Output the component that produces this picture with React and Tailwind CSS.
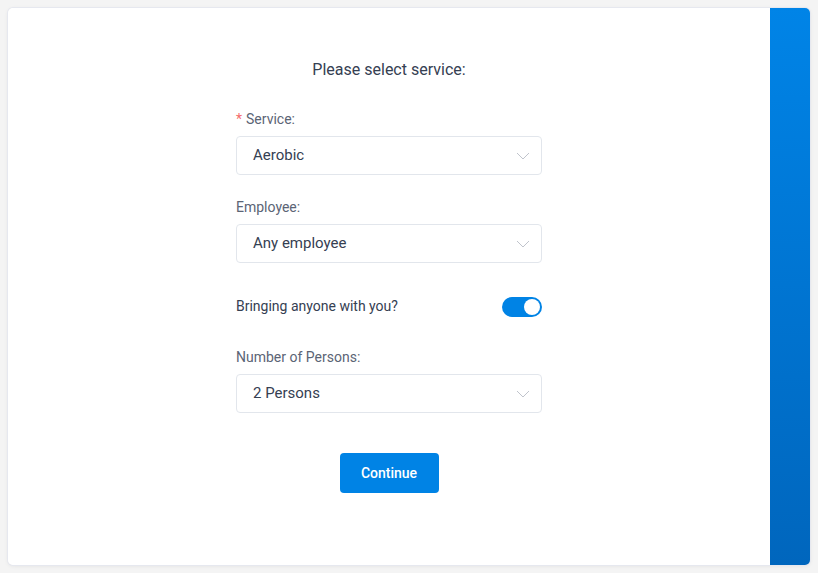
function Select({ value }) {
    return (
        <div className="flex items-center justify-between h-[39px] pl-4 pr-[10px] bg-white border border-[#e2e6ec] rounded-[4px]">
            <span className="text-[15px] text-[#354052]">{value}</span>
            <svg width="14" height="8" viewBox="0 0 14 8" fill="none" className="mr-[1px]">
                <path d="M1 1l6 6 6-6" stroke="#c0c4cc" strokeWidth="1" />
            </svg>
        </div>
    )
}

export default function App() {
    return (
        <div className="w-[818px] h-[573px] bg-[#f4f4f4] p-2 font-['Roboto',sans-serif]">
            <div className="flex h-[557px] w-[802px] rounded-[5px] overflow-hidden shadow-[0_0_0_1px_#e6e8ef,0_1px_4px_rgba(0,0,0,0.08)]">
                <div className="flex-1 bg-white flex flex-col items-center pt-[51px]">
                    <h1 className="text-[16px] text-[#354052] leading-[22px]">Please select service:</h1>
                    <div className="w-[306px] mt-[28px] flex flex-col">
                        <label className="text-[14px] text-[#5b6475] leading-[20px] mb-[7px]">
                            <span className="text-[#f56c6c] mr-1">*</span>Service:
                        </label>
                        <Select value="Aerobic" />
                        <label className="text-[14px] text-[#5b6475] leading-[20px] mt-[22px] mb-[7px]">Employee:</label>
                        <Select value="Any employee" />
                        <div className="flex items-center justify-between mt-[33px]">
                            <span className="text-[14px] text-[#354052]">Bringing anyone with you?</span>
                            <div className="w-[40px] h-[20px] rounded-full bg-[#0083e5] flex items-center justify-end pr-[2px]">
                                <div className="w-[16px] h-[16px] rounded-full bg-white" />
                            </div>
                        </div>
                        <label className="text-[14px] text-[#5b6475] leading-[20px] mt-[30px] mb-[7px]">Number of Persons:</label>
                        <Select value="2 Persons" />
                    </div>
                    <button className="mt-[40px] w-[99px] h-[40px] rounded-[4px] bg-[#0083e5] text-white text-[14px] font-medium">
                        Continue
                    </button>
                </div>
                <div className="w-[40px] bg-gradient-to-b from-[#0084e7] to-[#0066bd]" />
            </div>
        </div>
    )
}
